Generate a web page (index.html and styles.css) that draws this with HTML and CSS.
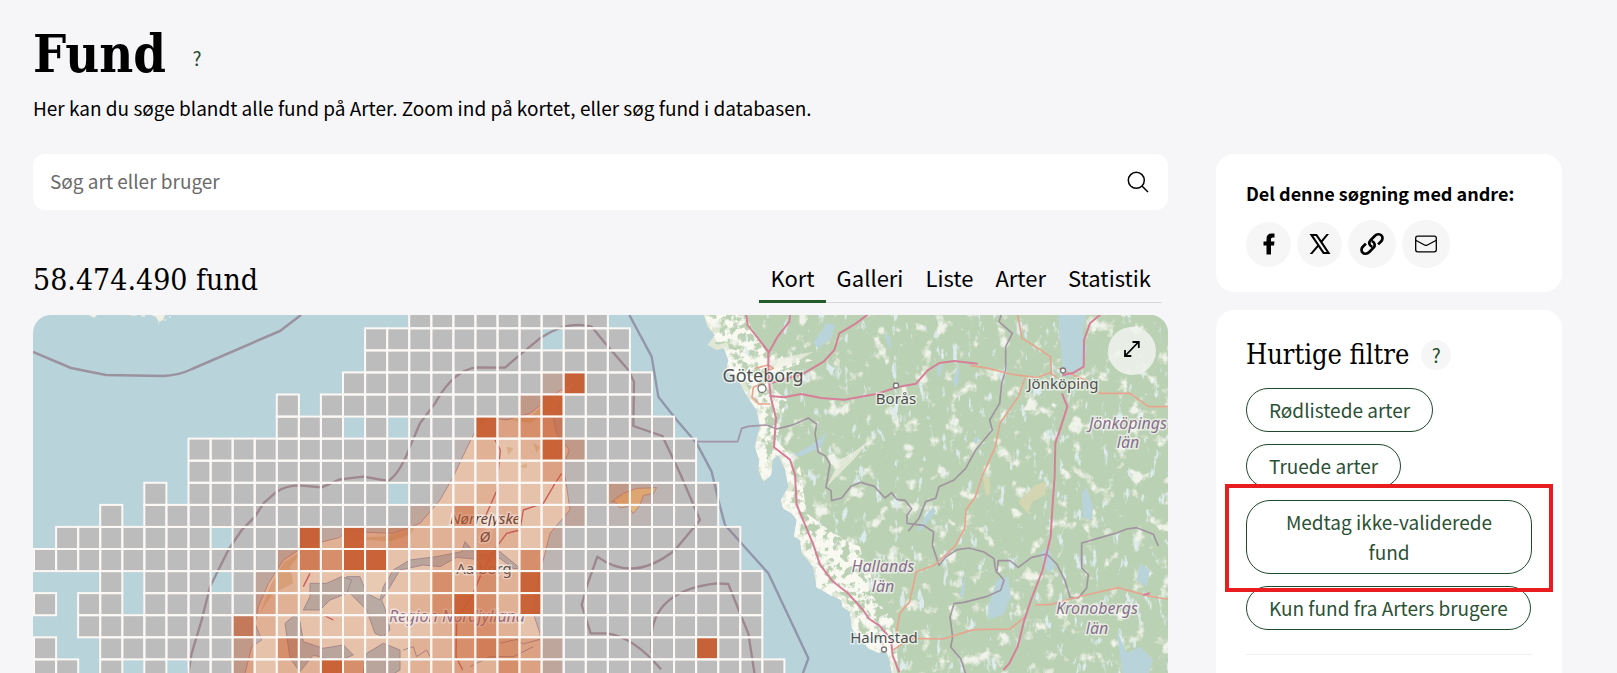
FILE: index.html
```html
<!DOCTYPE html>
<html lang="da">
<head>
<meta charset="utf-8">
<title>Fund</title>
<link rel="stylesheet" href="styles.css">
</head>
<body>
<div class="page">
  <header class="intro">
    <div class="title-row">
      <h1 class="title">Fund</h1>
      <button class="help help-plain" type="button" aria-label="Hjælp">?</button>
    </div>
    <p class="lead">Her kan du søge blandt alle fund på Arter. Zoom ind på kortet, eller søg fund i databasen.</p>
  </header>
  <div class="columns">
    <main class="main">
      <form class="search">
        <input class="search-input" type="text" placeholder="Søg art eller bruger" aria-label="Søg art eller bruger">
        <button class="search-button" type="button" aria-label="Søg">
          <svg width="24" height="24" viewBox="0 0 24 24" fill="none" stroke="#000" stroke-width="1.5"><circle cx="10.3" cy="10.3" r="8"/><path d="M16 16l6 6"/></svg>
        </button>
      </form>
      <div class="result-row">
        <h2 class="count">58.474.490 fund</h2>
        <nav class="tabs">
          <a class="tab tab-active" href="#kort">Kort</a>
          <a class="tab" href="#galleri">Galleri</a>
          <a class="tab" href="#liste">Liste</a>
          <a class="tab" href="#arter">Arter</a>
          <a class="tab" href="#statistik">Statistik</a>
        </nav>
      </div>
      <section class="map" aria-label="Kort">
        <svg class="map-canvas" width="100%" height="100%">
          <defs>
            <path id="sweden" d="M310 0L310 40 322 80 345 105 322 135 350 150 372 145 385 180 378 215 405 225 420 250 445 295 470 330 480 380 464 440 478 480 475 510 490 545 513 525 518 480 534 465 556 510 565 560 543 600 548 625 575 640 590 660 582 710 600 720 605 760 640 800 650 862 690 885 724 900 728 920 750 935 756 985 775 1010 805 1045 835 1058 858 1050 868 1080 880 1140H1800V0Z"/>
            <clipPath id="land-clip"><use href="#sweden"/></clipPath>
            <filter id="fields" x="0" y="0" width="100%" height="100%"><feTurbulence type="fractalNoise" baseFrequency=".022 .02" numOctaves="7" seed="8"/><feColorMatrix values="0 0 0 0 .945  0 0 0 0 .945  0 0 0 0 .89  6 0 0 0 -3.6"/></filter>
            <filter id="lakes" x="0" y="0" width="100%" height="100%"><feTurbulence type="fractalNoise" baseFrequency=".04 .016" numOctaves="4" seed="23"/><feColorMatrix values="0 0 0 0 .725  0 0 0 0 .83  0 0 0 0 .86  9 0 0 0 -6"/></filter>
            <filter id="coast" x="0" y="0" width="100%" height="100%"><feTurbulence type="fractalNoise" baseFrequency=".04" numOctaves="5" seed="4"/><feColorMatrix values="0 0 0 0 .945  0 0 0 0 .945  0 0 0 0 .89  8 0 0 0 -3.4" result="n"/><feComposite in="n" in2="SourceGraphic" operator="in"/></filter>
          </defs>
          <rect width="100%" height="100%" fill="#b9d3da"/>
          <path d="M56 0h8l-3 3zM118 0h14l-2 5-4 2-3-5z" fill="#f0f1e4"/>
          <path d="M98 0h6M108 1h4M125 8h1M131 5h2M136 2h2" stroke="#e3ebe2" stroke-width="1.5"/>
          <g transform="translate(567 -15) scale(.33333)">
            <use href="#sweden" fill="#bbd1b3"/>
            <g clip-path="url(#land-clip)">
              <rect x="300" y="40" width="1420" height="1100" filter="url(#fields)" opacity=".85"/>
              <rect x="300" y="40" width="1420" height="1100" filter="url(#lakes)"/>
              <use href="#sweden" fill="none" stroke="#f0f1e4" stroke-width="30" opacity=".7"/>
              <path d="M310 40L430 40 500 160 640 180 480 230 560 300 530 420 600 500 620 640 700 700 780 740 810 880 880 960 900 1140H850L640 850 540 600 450 500 430 300Z" fill="#f0f1e4" filter="url(#coast)"/>
              <path d="M600 660L680 690 760 740 810 800 820 880 780 900 850 960 880 1100 760 1000 650 870Z" fill="#f2f2e8" filter="url(#coast)"/>
              <path d="M500 190l60-20 80-15-60 36-70 20zM680 560l40-80 50-30 40-30-50 60-60 60z" fill="#f0f1e4" opacity=".7"/>
              <path d="M640 130l40-60 25 5-10 40-40 30zM580 465l70-40 30-30-15 45-60 28zM855 100l15 10 5 40-14-20z" fill="#b9d3da"/>
              <path d="M1375 40h84l-10 60 10 60-12 40-28 28-30 2-6-80-6-50zM1445 150l18-18-3 14zM1445 580l14-20 20 60-4 40-26-8zM1165 920l25-80 35-10 8 60-20 50-45 20zM1010 200l20-10-14 50zM1060 240l18-55-2 60-12 20zM1120 420l20-15-12 30zM950 690l25-40 25-30 8 15-50 60zM1550 990l30 70 40-20 40 40-20 60h-70zM1620 790l30 20-10 50-30-20zM1320 760l25-20 20 60-20 20zM1080 880l18-60-8 80z" fill="#b9d3da"/>
              <path d="M1255 605l50-50 35-10-4 40-40 20-12 35-18-20zM1150 535l18-5 2 50-12 8z" fill="#d3d6b0"/>
            </g>
            <g fill="none" stroke="#9c8a9e" stroke-width="5" stroke-linejoin="round" opacity=".85">
              <path d="M290 425H413l12-40 20-6 55-4 30 12 40-10 15-5 40-18 25 18-5 30 10 55 20 10 15 25-12 70 15 10 2 30 30-8 28-35 30-12 40 12 32 35 20-16 15 20 25 3 20 25-14 20v24l50 6 30 20-4 40 20 60 20-25 35-22 35-5 45 12 30 20 5 35 25 30-10 30-40 18-70 18-30 4-12 40 8 60-6 30 30 35 20 60M1205 40l-8 25 40 35-20 40v70l-12 40-6 60-30 50 8 30-50 60-30 55-35 35-45 20-10 35-30 10-20 50-32 38M1190 820l5-38 35 0 25 20 40-30 45-10 30 30 25 50 15 50 25 2 25-30 5-40-20-20 0-75 35-10 70-20 30-12 30-4 50 20 15 35"/>
            </g>
            <g fill="none" stroke="#e7a58f" stroke-width="5" stroke-linejoin="round">
              <path d="M490 250l-30 12-4 30 20 20h35M465 205l40-10 15 10-30 12M1110 196l60 10 60 16 80 11 40-15 20 15M1252 40l14 75 40 25 45 30 4 55M1275 235l-20 55-55 80-14 70-40 90-20 60-28 40-4 55-30 55-60 55-55 20-20 90-30 35-10 60M1375 205l80 35 45 40 90 0 55 40 60 0M1305 915l50-2 90-25 110-25 90 25 60 10M880 1050l50-35 100 2 90-28 110-2 50-40"/>
            </g>
            <g fill="none" stroke="#d67f98" stroke-width="6" stroke-linejoin="round">
              <path d="M438 40l5 35 62 80v70l8 70 15 60-6 87 48 37 15 45 5 90 50 120 20 60 38 50 45 35 45 50 20 28 30 20 35 40 5 50 20 50M570 40l-2 25-35 45-28 50M808 40l-40 30-50 30-15 50-32 35-65 38-90 25M508 288l45 4 50-10 60 12 70 5 100-18 60-20 55-10 35-40 35-22 45-6 70 8M1505 40l-35 30-18 50-1 80-30 18-34 8M1386 280l16 40-16 50-20 60-2 100-6 80-6 100-24 100-35 90-20 60-20 80-25 50-18 20M1630 885l20-5"/>
            </g>
          </g>
          <g id="cells-base"></g>
          <g transform="translate(307 -15) scale(.33333)">
            <path d="M735 225L640 285 570 340 500 360 450 352 410 385 380 445 340 530 300 600 240 670 160 700 80 697 20 690 0 712-110 740-170 780-215 850-245 920-255 970-235 1020-265 1040-290 1140H605L600 1000 580 940 590 850 610 780 630 700 690 630 680 560 670 500 688 450 650 400 640 360 670 290Z" fill="#e8c9b2" stroke="#b48a8a" stroke-width="3"/>
            <path d="M20 700q60 20 140 4l70-30-20 30-60 20-110-6zM-110 750l-60 40-40 70-30 80 40-60 60-30-10-50zM640 290l-70 60-60 10 60 10 60-40zM560 490l-20 10 20 5zM580 430l20 10-10 20zM500 440l20 5-15 20z" fill="#cfa26d" opacity=".55"/>
            <g fill="#b9aaa4" stroke="#a08c92" stroke-width="3">
              <path d="M540 805L480 755 410 765 375 725 365 755 290 770 210 780 160 810 130 860 120 900 80 880 60 830 20 830 20 870 80 930 105 1000 130 1010 150 990 140 940 125 900 150 860 180 810 250 795 300 800 350 772 410 778 480 775 520 806Z"/>
              <path d="M-90 850l50 0 45-20 30 10-15 40-50 20-30 30-50 0 20-40zM-165 970l30-25 15 20 10 60 60 20 60-10 30 30-50 20-70-20-40 50-30-40zM80 1060l50-30 50 20 0 60-50 30-60-20z"/>
              <path d="M190 1050l30-10 10 30 30-20 10 20M480 1030l50-12 20 14 50-14M390 1100l60-30 70 0 60-30" fill="none"/>
            </g>
            <path d="M815 605l35-25 40-15 60-2-10 18-30 5-10 30-20 25-15-22-25 5-15-20z" fill="#e5bb86" stroke="#b98980" stroke-width="3"/>
            <g fill="none" stroke="#cb5a58" stroke-width="4" stroke-linejoin="round"><path d="M465 420l16 30-6 60-4 60-35 80M665 520l-20 30-35 60-60 20-10 60-40 10-30 40-45 80-30 70-45 70-2 110 20 40M-90 820l-20 40M-60 940l40 20"/></g>
          </g>
          <g fill="none" stroke="#8f7687" stroke-width="2.500" opacity=".7" stroke-linejoin="round">
            <path d="M0 37l38 16 35 7 58 1q16-1 28-7l88-38 21-16"/>
          </g>
          <g transform="translate(307 -15) scale(.33333)" fill="none" stroke="#8d6a76" stroke-width="7" opacity=".65" stroke-linejoin="round">
            <path d="M-455 1119L-445 1060-415 960-390 860-335 750-295 690-255 650-230 610-190 575Q-160 556-125 556L-55 562 0 538 70 530 145 543Q180 520 210 440L240 370 285 310Q340 210 410 202L495 203 545 160 600 115Q680 60 755 80L800 135 865 210 882 245 880 378 967 408 1020 520 1080 660 1005 750Q880 850 772 770L740 860 725 915 752 1000H800Q880 1010 963 1108"/>
            <path d="M935 1060V1000Q950 870 1130 850L1165 852 1200 940 1225 1000 1245 1130"/>
            <path d="M868 45L935 170 955 290 1010 360 1070 430 1115 515 1135 600 1155 675 1285 820 1405 1075 1387 1125" stroke="#7d7590"/>
          </g>
          <g class="label label-area" text-anchor="middle">
            <text class="label-dark" x="452" y="209">Nørrejyske</text><text class="label-dark" x="452" y="227">Ø</text>
            <text x="424" y="307">Region Nordjylland</text>
            <text x="1095" y="114">Jönköpings</text><text x="1095" y="133">län</text>
            <text x="850" y="257">Hallands</text><text x="850" y="277">län</text>
            <text x="1064" y="299">Kronobergs</text><text x="1064" y="319">län</text>
          </g>
          <g class="label" text-anchor="middle">
            <text x="451" y="259">Aalborg</text><text class="label-city" x="730" y="67">Göteborg</text>
            <text x="863" y="89">Borås</text><text x="1030" y="74">Jönköping</text><text x="851" y="328">Halmstad</text>
          </g>
          <g fill="#fff" stroke="#777" stroke-width="1.3"><circle cx="729" cy="73.500" r="4"/><circle cx="863" cy="70.500" r="2.500"/><circle cx="1030" cy="55.500" r="2.500"/><circle cx="851" cy="334.500" r="2.500"/></g>
          <g id="cells-heat"></g>
        </svg>
        <button class="expand" type="button" aria-label="Fuld skærm">
          <svg width="18" height="18" viewBox="0 0 18 18" fill="none" stroke="#000" stroke-width="1.8"><path d="M2.500 15.500L15.500 2M9.500 2H15.800V8M2 10V16H8.300"/></svg>
        </button>
      </section>
    </main>
    <aside class="side">
      <section class="card">
        <h3 class="share-title">Del denne søgning med andre:</h3>
        <div class="share-row">
          <a class="share" href="#facebook" aria-label="Facebook"><svg width="24" height="24" viewBox="0 0 24 24"><path d="M9.500 22.500V13.500H6.500V9.500H9.500V7Q9.500 1.500 14.500 1.500H17.500V5.500H15.500Q14 5.500 14 7V9.500H17.500L17 13.500H14V22.500Z"/></svg></a>
          <a class="share" href="#x" aria-label="X"><svg width="24" height="24" viewBox="0 0 24 24"><path fill-rule="evenodd" d="M1.500 2H9L13.300 8.300 18.500 2H21L14.500 10 22.500 22H15L10.300 15 4.300 22H1.700L9.200 13.200ZM5.400 4L16.200 20H18.700L7.900 4Z"/></svg></a>
          <a class="share share-large" href="#link" aria-label="Link"><svg width="24" height="24" viewBox="0 0 24 24" fill="none" stroke="#000" stroke-width="2.700"><path d="M12.300 14.900C8.800 13.600 8.500 10.200 10.600 8.100L14.700 4C17 1.700 20 1.900 21.400 3.400 23 5 22.800 7.700 21 9.500L18.100 12.400"/><path d="M11.700 9.100C15.200 10.400 15.500 13.800 13.400 15.900L9.300 20C7 22.300 4 22.100 2.600 20.600 1 19 1.200 16.300 3 14.500L5.900 11.600"/></svg></a>
          <a class="share share-large" href="#mail" aria-label="E-mail"><svg width="24" height="24" viewBox="0 0 24 24" fill="none" stroke="#000" stroke-width="1.300"><rect x="1.700" y="4.200" width="20.600" height="15.600" rx="2"/><path d="M1.700 8.200L11 13.200Q12 13.700 13 13.200L22.300 8.200"/></svg></a>
        </div>
      </section>
      <section class="card card-filters">
        <div class="filter-head">
          <h3 class="filter-title">Hurtige filtre</h3>
          <button class="help" type="button" aria-label="Hjælp til filtre">?</button>
        </div>
        <div class="chips">
          <button class="chip" type="button">Rødlistede arter</button>
          <button class="chip" type="button">Truede arter</button>
          <div class="marked"><button class="chip" type="button">Medtag ikke-validerede fund</button></div>
          <button class="chip" type="button">Kun fund fra Arters brugere</button>
        </div>
        <hr class="rule">
      </section>
    </aside>
  </div>
</div>
<script src="map.js"></script>
</body>
</html>
```
FILE: styles.css
```css
* { box-sizing: border-box; }
body {
  margin: 0;
  background: #f6f6f8;
  color: #000;
  font-family: "Noto Sans CJK SC", "Noto Sans", sans-serif;
  font-size: 19px;
  line-height: 30px;
}
button, input { font: inherit; color: inherit; }
h1, h2, h3, p { margin: 0; }
.page {
  display: flex;
  flex-direction: column;
  height: 100vh;
  overflow: hidden;
  padding: 24px 55px 0 33px;
}
.title-row { display: flex; align-items: center; gap: 16px; height: 60px; }
.title, .count, .filter-title { font-family: "DejaVu Serif Condensed", "DejaVu Serif", serif; }
.title { font-size: 52px; line-height: 60px; font-weight: 700; }
.lead { margin-top: 9px; }
.help {
  width: 30px;
  height: 30px;
  padding: 0;
  border: 0;
  border-radius: 50%;
  background: #f6f6f6;
  color: #1f4a2b;
  line-height: 30px;
}
.help-plain { background: transparent; margin-top: 8px; }
.columns {
  display: grid;
  grid-template-columns: minmax(0, 1fr) 346px;
  gap: 48px;
  flex: 1;
  min-height: 0;
  margin-top: 31px;
}
.main { display: flex; flex-direction: column; min-height: 0; }
.search {
  display: flex;
  align-items: center;
  flex: none;
  height: 56px;
  padding: 0 18px 2px 17px;
  background: #fff;
  border-radius: 12px;
}
.search-input { flex: 1; min-width: 0; border: 0; padding: 0; background: none; outline: 0; }
.search-input::placeholder { color: #6b6b6b; opacity: 1; }
.search-button { display: flex; padding: 2px 0 0; border: 0; background: none; }
.result-row {
  display: flex;
  justify-content: space-between;
  align-items: flex-end;
  flex: none;
  margin: 44px 6px 12px 0;
}
.count { font-size: 30px; line-height: 46px; font-weight: 400; }
.tabs { display: flex; border-bottom: 1px solid #d8d8da; }
.tab {
  padding: 7px 11px;
  border-bottom: 3px solid transparent;
  margin-bottom: -1px;
  color: #000;
  font-size: 22px;
  line-height: 32px;
  text-decoration: none;
}
.tab-active { border-color: #235b28; }
.map {
  position: relative;
  flex: 1;
  min-height: 0;
  overflow: hidden;
  border-radius: 18px 18px 0 0;
}
.map-canvas { display: block; }
.label {
  font-family: "Noto Sans", sans-serif;
  font-size: 15px;
  fill: #505050;
  stroke: rgba(255, 255, 255, .6);
  stroke-width: 3px;
  paint-order: stroke;
}
.label-area { font-style: italic; font-size: 16px; fill: #8a6f8c; }
.label-dark { font-size: 15px; fill: #5b4038; }
.label-city { font-size: 18px; }
.expand {
  position: absolute;
  top: 12px;
  right: 12px;
  display: grid;
  place-items: center;
  width: 48px;
  height: 48px;
  padding: 0 0 4px;
  border: 0;
  border-radius: 50%;
  background: rgba(240, 243, 238, .85);
}
.side { display: flex; flex-direction: column; gap: 18px; min-height: 0; }
.card { padding: 24px 30px; background: #fff; border-radius: 18px; }
.card-filters { flex: 1; border-radius: 18px 18px 0 0; }
.share-title { font-size: 18px; line-height: 30px; font-weight: 700; }
.share-row { display: flex; align-items: center; gap: 6px; margin-top: 12px; }
.share {
  display: grid;
  place-items: center;
  width: 45px;
  height: 45px;
  border-radius: 50%;
  background: #f6f6f6;
}
.share-large { width: 48px; height: 48px; }
.filter-head { display: flex; align-items: center; gap: 12px; height: 42px; }
.filter-title { font-size: 27px; line-height: 42px; font-weight: 400; }
.chips { display: flex; flex-direction: column; align-items: flex-start; gap: 12px; margin-top: 12px; }
.chip {
  padding: 6px 22px;
  border: 1px solid #1f4a2b;
  border-radius: 24px;
  background: #fff;
  color: #2b5135;
  line-height: 30px;
}
.marked { position: relative; }
.marked::after {
  content: "";
  position: absolute;
  inset: -16px -21px -18px;
  border: 4px solid #e91c1f;
  pointer-events: none;
}
.rule { margin: 24px 0 0; border: 0; border-top: 1px solid #f0f0f0; }
```
FILE: map.js
```js
// One text row per grid row: "." empty, "g" no land finds, "a".."f" rising density.
const rows = [
  ".................ggggggggg",
  "...............gggggggg.ggg",
  "...............gggggggggggg",
  "..............gggggggggbfggg",
  "...........g.gggggggggcfgggg",
  "...........ggg.g.gggfcdeggggg",
  ".......ggggggggggggababfcggggg",
  ".......ggggggggggggaaaacaggggg",
  ".....g.ggggggggg.gaabaaaagcbagg",
  "...g.ggggggggggggbadabaabgaaggg",
  ".ggggggg.gggfbfcdbbbcbabgggggggg",
  "gggggggggggcedffaabbfadagggggggg",
  "...g.ggg.gbbaaggaadbdbfgggggggggg",
  "g.gg.gggggcbaaagabdfdbfgggggggggg",
  "..gggggggebaaaaaaabddbagggggggggg",
  "g..ggggggcadbaaaabbdedcbggggggfgg",
  "gg.g.g.ggcabbfdaabbcbdcbgggggggggg"
];
const heat = { a: 0.06, b: 0.22, c: 0.36, d: 0.55, e: 0.7, f: 0.94 };
const size = 22.07;
let base = "";
let overlay = "";
rows.forEach((row, r) => {
  [...row].forEach((c, k) => {
    if (c === ".") return;
    const box = `x="${(1 + k * size).toFixed(1)}" y="${(13.3 + (r - 1) * size).toFixed(1)}" width="22.1" height="22.1"`;
    base += `<rect ${box} fill="#bcbcbc"/>`;
    overlay += `<rect ${box} fill="#c85c30" fill-opacity="${heat[c] || 0}" stroke="#fbf8f6" stroke-width="2"/>`;
  });
});
document.getElementById("cells-base").innerHTML = base;
document.getElementById("cells-heat").innerHTML = overlay;
```
